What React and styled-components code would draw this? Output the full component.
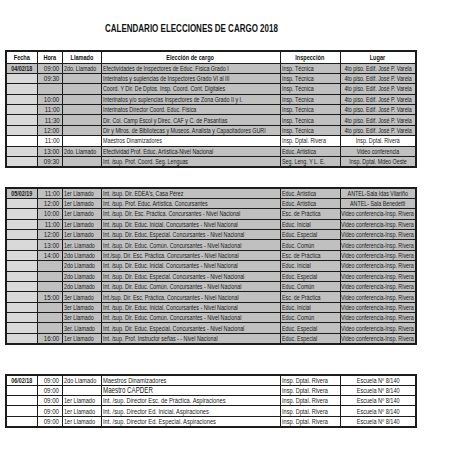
import React from "react";
import styled, { createGlobalStyle } from "styled-components";

const SANS = `"Liberation Sans", Arial, sans-serif`;

const GlobalStyle = createGlobalStyle`
	html, body {
		margin: 0;
		padding: 0;
		background: #ffffff;
	}
	body {
		font-family: ${SANS};
		color: #111;
	}
`;

const Page = styled.div`
	width: 452px;
	height: 452px;
	padding: 23px 0 0 5px;
	box-sizing: border-box;
	overflow: hidden;
`;

const Title = styled.h1`
	margin: 0 0 0 100px;
	font-family: ${SANS};
	font-weight: 700;
	font-size: 10px;
	line-height: 12px;
	color: #111;
	white-space: nowrap;

	span {
		display: inline-block;
		transform: scaleX(0.8);
		transform-origin: left center;
	}
`;

const Sheet = styled.table`
	border-collapse: collapse;
	table-layout: fixed;
	width: 409px;
	margin-top: ${(p) => p.$top}px;
	border: 2px solid #1c1c1c;

	tbody tr {
		height: 10.4px;
	}
`;

const Cell = styled.td`
	padding: 0 ${(p) => (p.$align === "right" ? 2 : 1)}px;
	border: 1px solid #1c1c1c;
	background: ${(p) => p.$bg || "#c0c0c0"};
	font-size: ${(p) => p.$size || 6.5}px;
	font-weight: ${(p) => (p.$bold ? 700 : 400)};
	line-height: 7px;
	overflow: hidden;
	color: #1a1a1a;
`;

const HeadCell = styled.th`
	height: 10.5px;
	padding: 0 2px;
	border: 1px solid #1c1c1c;
	background: #ffffff;
	font-size: 6.8px;
	font-weight: 700;
	line-height: 7px;
	overflow: hidden;
	color: #111;
`;

const justify = { left: "flex-start", center: "center", right: "flex-end" };

const Fit = styled.div`
	display: flex;
	align-items: center;
	justify-content: ${(p) => justify[p.$align || "left"]};
	white-space: nowrap;
`;

const Squeeze = styled.span`
	display: inline-block;
	flex-shrink: 0;
	transform: scaleX(${(p) => p.$scale || 0.82});
	transform-origin: ${(p) => p.$align || "left"} center;
`;

function Text({ align = "left", scale, children }) {
	return (
		<Fit $align={align}>
			<Squeeze $align={align} $scale={scale}>
				{children}
			</Squeeze>
		</Fit>
	);
}

const widths = [31, 25, 39, 179, 60, 76];

const LIGHT = "#d9d9d9";
const GRAY = "#c0c0c0";
const WHITE = "#ffffff";

const varela = "4to piso. Edif. José P. Varela";
const video = "Video conferencia-Insp. Rivera";

const first = [
	["04/02/18", "09:00", "2do. Llamado", "Efectividades de Inspectores de Educ. Física Grado I", "Insp. Técnica", varela],
	["", "09:30", "", "Interinatos y suplencias de Inspectores Grado VI al III", "Insp. Técnica", varela],
	["", "", "", "Coord. Y Dir. De Dptos. Insp. Coord. Cont. Digitales", "Insp. Técnica", varela],
	["", "10:00", "", "Interinatos y/o suplencias Inspectores de Zona Grado  II y I.", "Insp. Técnica", varela],
	["", "11:00", "", "Interinatos Director Coord. Educ. Física", "Insp. Técnica", varela],
	["", "11:30", "", "Dir. Col. Camp Escol y Direc. CAF y C. de Pasantías", "Insp. Técnica", varela],
	["", "12:00", "", "Dir y Mtros.  de  Bibliotecas y Museos. Analista y Capacitadores GURI", "Insp. Técnica", varela],
	["", "11:00", "", "Maestros Dinamizadores", "Insp. Dptal. Rivera", "Insp. Dptal. Rivera", true],
	["", "13:00", "2do. Llamado", "Efectividad Prof. Educ. Artística-Nivel Nacional", "Educ. Artística", "Video conferencia"],
	["", "09:30", "", "Int. /sup. Prof. Coord. Seg. Lenguas", "Seg. Leng. Y L. E.", "Insp. Dptal. Mdeo Oeste"],
];

const second = [
	["05/02/19", "11:00", "1er Llamado", "Int. /sup. Dir. EDEA's, Casa Pérez", "Educ. Artística", "ANTEL-Sala Idas Vilariño"],
	["", "12:00", "1er Llamado", "Int. /sup. Prof. Educ. Artística. Concursantes", "Educ. Artística", "ANTEL- Sala Benedetti"],
	["", "10:00", "1er Llamado", "Int. /sup. Dir. Esc. Práctica. Concursantes - Nivel Nacional", "Esc. de Práctica", video],
	["", "11:00", "1er Llamado", "Int. /sup. Dir. Educ. Inicial. Concursantes  - Nivel Nacional", "Educ. Inicial", video],
	["", "12:00", "1er Llamado", "Int. /sup. Dir. Educ. Especial. Concursantes  - Nivel Nacional", "Educ. Especial", video],
	["", "13:00", "1er. Llamado", "Int. /sup. Dir. Educ. Común. Concursantes  - Nivel Nacional", "Educ. Común", video],
	["", "14:00", "2do Llamado", "Int./sup. Dir. Esc. Práctica. Concursantes - Nivel Nacional", "Esc. de Práctica", video],
	["", "", "2do Llamado", "Int. /sup. Dir. Educ. Inicial. Concursantes - Nivel Nacional", "Educ. Inicial", video],
	["", "", "2do Llamado", "Int. /sup. Dir. Educ. Especial. Concursantes - Nivel Nacional", "Educ. Especial", video],
	["", "", "2do Llamado", "Int. /sup. Dir. Educ. Común. Concursantes  - Nivel Nacional", "Educ. Común", video],
	["", "15:00", "3er Llamado", "Int./sup. Dir. Esc. Práctica. Concursantes - Nivel Nacional", "Esc. de Práctica", video],
	["", "", "3er Llamado", "Int. /sup. Dir. Educ. Inicial. Concursantes  - Nivel Nacional", "Educ. Inicial", video],
	["", "", "3er Llamado", "Int. /sup. Dir. Educ. Común. Concursantes  - Nivel Nacional", "Educ. Común", video],
	["", "", "3er. Llamado", "Int. /sup. Dir. Educ. Especial. Concursantes  - Nivel Nacional", "Educ. Especial", video],
	["", "16:00", "1er Llamado", "Int. /sup. Prof. Instructor señas - - Nivel Nacional", "Educ. Especial", video],
];

const escuela = "Escuela Nº 8/140";
const rivera = "Insp. Dptal. Rivera";

const third = [
	["06/02/18", "09:00", "2do Llamado", "Maestros Dinamizadores", rivera, escuela],
	["", "09:00", "", "Maestro CAPDER", rivera, escuela, true],
	["", "09:00", "1er Llamado", "Int. /sup. Director Esc. de  Práctica.  Aspiraciones", rivera, escuela],
	["", "09:00", "1er Llamado", "Int. /sup. Director Ed. Inicial. Aspiraciones", rivera, escuela],
	["", "09:00", "1er Llamado", "Int. /sup. Director Ed. Especial. Aspiraciones", rivera, escuela],
];

function Cols() {
	return (
		<colgroup>
			{widths.map((w, i) => (
				<col key={i} style={{ width: w }} />
			))}
		</colgroup>
	);
}

function ShadedRow({ row }) {
	const [fecha, hora, llamado, cargo, insp, lugar, white] = row;
	const bg = white ? WHITE : GRAY;
	return (
		<tr>
			<Cell $bg={fecha ? GRAY : white ? WHITE : LIGHT} $bold $size={6.6}>
				<Text align="center">{fecha}</Text>
			</Cell>
			<Cell $bg={bg} $align="right">
				<Text align="right" scale={0.95}>{hora}</Text>
			</Cell>
			<Cell $bg={bg}>
				<Text>{llamado}</Text>
			</Cell>
			<Cell $bg={bg}>
				<Text>{cargo}</Text>
			</Cell>
			<Cell $bg={bg}>
				<Text>{insp}</Text>
			</Cell>
			<Cell $bg={bg}>
				<Text align="center">{lugar}</Text>
			</Cell>
		</tr>
	);
}

function WhiteRow({ row }) {
	const [fecha, hora, llamado, cargo, insp, lugar, big] = row;
	return (
		<tr>
			<Cell $bg={WHITE} $bold $size={6.6}>
				<Text align="center">{fecha}</Text>
			</Cell>
			<Cell $bg={WHITE} $align="right" $size={6.8}>
				<Text align="right" scale={0.9}>{hora}</Text>
			</Cell>
			<Cell $bg={WHITE} $size={6.8}>
				<Text>{llamado}</Text>
			</Cell>
			<Cell $bg={WHITE} $size={big ? 8.6 : 7}>
				<Text scale={big ? 0.72 : 0.82}>{cargo}</Text>
			</Cell>
			<Cell $bg={WHITE} $size={6.8}>
				<Text>{insp}</Text>
			</Cell>
			<Cell $bg={WHITE} $size={6.8}>
				<Text align="center">{lugar}</Text>
			</Cell>
		</tr>
	);
}

const heads = ["Fecha", "Hora", "Llamado", "Elección de cargo", "Inspección", "Lugar"];

export default function App() {
	return (
		<Page>
			<GlobalStyle />
			<Title>
				<span>CALENDARIO ELECCIONES DE CARGO 2018</span>
			</Title>
			<Sheet $top={15}>
				<Cols />
				<thead>
					<tr>
						{heads.map((h) => (
							<HeadCell key={h}>
								<Text align="center">{h}</Text>
							</HeadCell>
						))}
					</tr>
				</thead>
				<tbody>
					{first.map((r, i) => (
						<ShadedRow key={i} row={r} />
					))}
				</tbody>
			</Sheet>
			<Sheet $top={19}>
				<Cols />
				<tbody>
					{second.map((r, i) => (
						<ShadedRow key={i} row={r} />
					))}
				</tbody>
			</Sheet>
			<Sheet $top={29}>
				<Cols />
				<tbody>
					{third.map((r, i) => (
						<WhiteRow key={i} row={r} />
					))}
				</tbody>
			</Sheet>
		</Page>
	);
}
